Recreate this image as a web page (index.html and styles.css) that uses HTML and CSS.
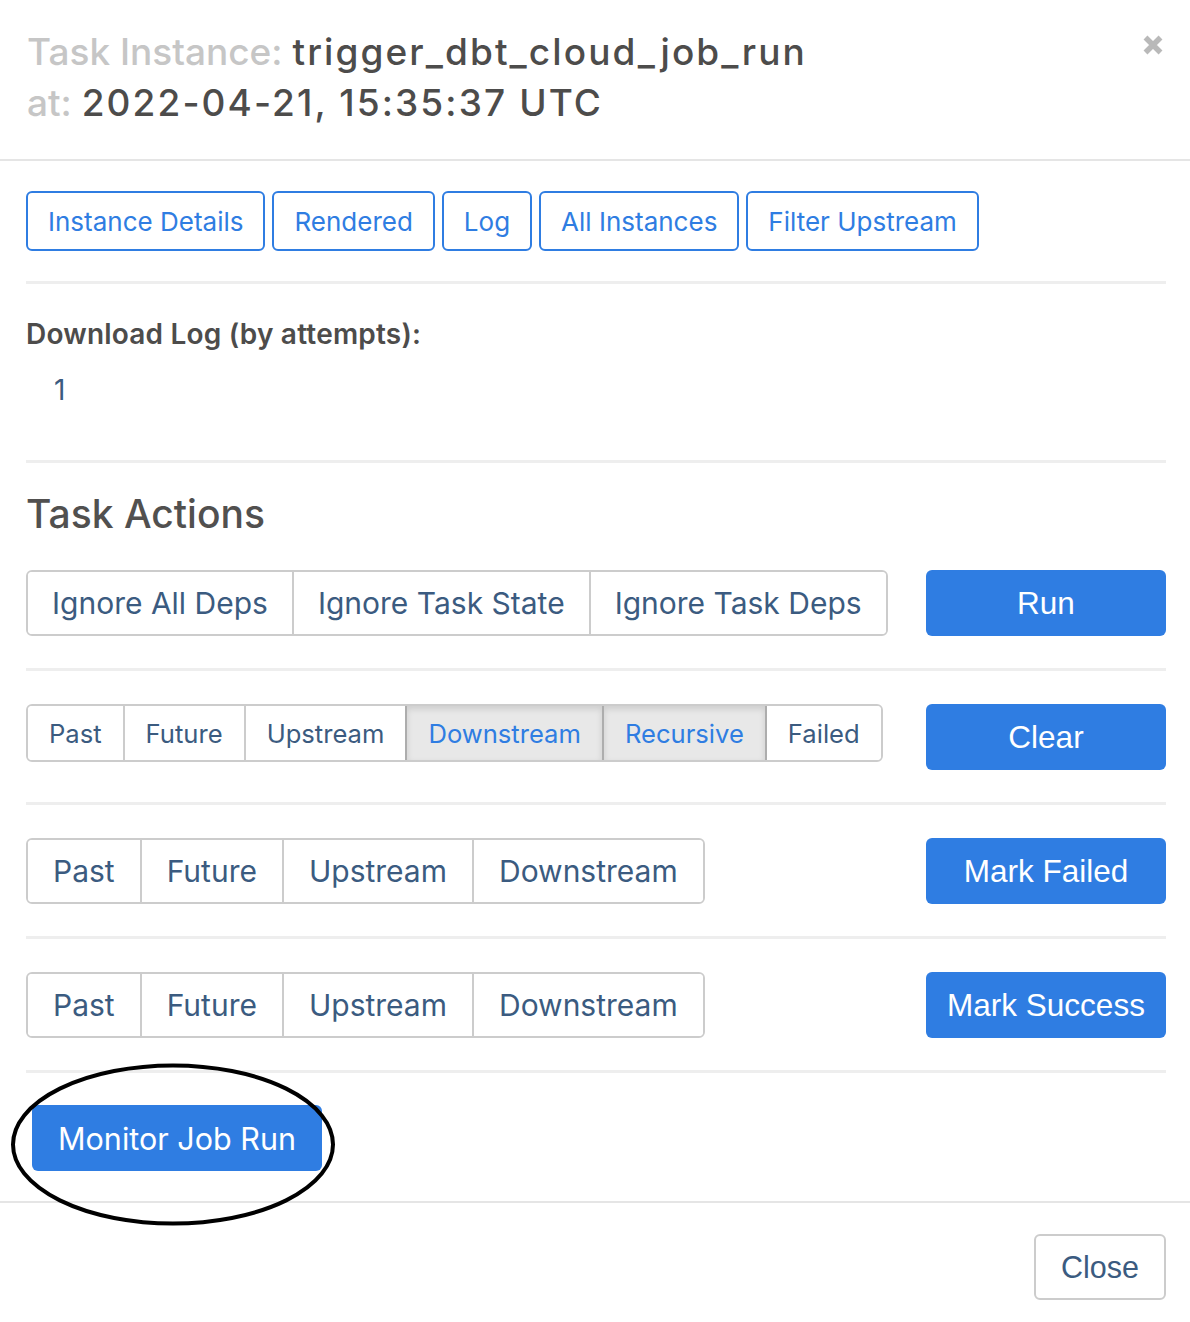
FILE: index.html
```html
<!DOCTYPE html>
<html lang="en">
<head>
<meta charset="utf-8">
<title>Task Instance</title>
<link rel="stylesheet" href="styles.css">
</head>
<body>
<div class="modal">
  <div class="modal-header">
    <h4 class="modal-title">
      <span class="muted">Task Instance:</span> <span class="value">trigger_dbt_cloud_job_run</span><br>
      <span class="muted">at:</span> <span class="value">2022-04-21, 15:35:37 UTC</span>
    </h4>
    <button class="close" aria-label="Close">
      <svg width="20" height="20" viewBox="0 0 20 20"><path d="M2.5 2.5 L17.5 17.5 M17.5 2.5 L2.5 17.5" stroke="#b9b9b9" stroke-width="5.5" stroke-linecap="butt"/></svg>
    </button>
  </div>
  <div class="modal-body">
    <div class="nav-buttons">
      <a class="btn-outline">Instance Details</a>
      <a class="btn-outline">Rendered</a>
      <a class="btn-outline">Log</a>
      <a class="btn-outline">All Instances</a>
      <a class="btn-outline">Filter Upstream</a>
    </div>
    <hr>
    <div class="download">
      <div class="download-label">Download Log (by attempts):</div>
      <ul class="attempts"><li><a>1</a></li></ul>
    </div>
    <hr>
    <h4 class="section-title">Task Actions</h4>
    <div class="action-row">
      <div class="btn-group">
        <span class="seg">Ignore All Deps</span>
        <span class="seg">Ignore Task State</span>
        <span class="seg">Ignore Task Deps</span>
      </div>
      <button class="btn-primary">Run</button>
    </div>
    <hr>
    <div class="action-row">
      <div class="btn-group small">
        <span class="seg">Past</span>
        <span class="seg">Future</span>
        <span class="seg">Upstream</span>
        <span class="seg active">Downstream</span>
        <span class="seg active">Recursive</span>
        <span class="seg">Failed</span>
      </div>
      <button class="btn-primary">Clear</button>
    </div>
    <hr>
    <div class="action-row">
      <div class="btn-group wide">
        <span class="seg">Past</span>
        <span class="seg">Future</span>
        <span class="seg">Upstream</span>
        <span class="seg">Downstream</span>
      </div>
      <button class="btn-primary">Mark Failed</button>
    </div>
    <hr>
    <div class="action-row">
      <div class="btn-group wide">
        <span class="seg">Past</span>
        <span class="seg">Future</span>
        <span class="seg">Upstream</span>
        <span class="seg">Downstream</span>
      </div>
      <button class="btn-primary">Mark Success</button>
    </div>
    <hr>
    <div class="extra">
      <button class="btn-primary monitor">Monitor Job Run</button>
      <svg class="annotation" width="330" height="166" viewBox="0 0 330 166"><ellipse cx="163" cy="81.5" rx="160" ry="79" fill="none" stroke="#000" stroke-width="4"/></svg>
    </div>
  </div>
  <div class="modal-footer">
    <button class="btn-default">Close</button>
  </div>
</div>
</body>
</html>
```
FILE: styles.css
```css
* { box-sizing: border-box; }
html, body { margin: 0; padding: 0; background: #fff; }
body {
  font-family: Inter, "Liberation Sans", Arial, sans-serif;
  color: #51504f;
  width: 1190px;
}
.modal { width: 1190px; }

.modal-header {
  display: flex;
  justify-content: space-between;
  align-items: flex-start;
  padding: 26px 27px 31px 27px;
  border-bottom: 2px solid #e5e5e5;
}
.modal-title {
  margin: 0;
  font-size: 37px;
  font-weight: 500;
  line-height: 51px;
  color: #4d4c4b;
}
.modal-title .muted { color: #c6c6c6; }
.modal-title .value { letter-spacing: 2.1px; }
.close {
  border: 0;
  background: none;
  padding: 0;
  margin: 9px 0 0 0;
  width: 20px;
  height: 20px;
  cursor: pointer;
}
.close svg { display: block; }

.modal-body {
  padding: 30px 24px 0 26px;
}
.nav-buttons {
  display: flex;
  gap: 7px;
}
.btn-outline {
  display: inline-flex;
  align-items: center;
  height: 60px;
  padding: 0 20px;
  border: 2px solid #2f7de2;
  border-radius: 6px;
  color: #2f7de2;
  font-size: 26px;
  font-weight: 400;
}
hr {
  border: 0;
  height: 3px;
  background: #eeeeee;
  margin: 32px 0 33px 0;
}
hr:first-of-type { margin-top: 30px; }
.download-label {
  font-size: 28px;
  font-weight: 600;
  letter-spacing: 0.2px;
  color: #4d4c4b;
  line-height: 36px;
  margin-top: -1px;
}
.attempts {
  list-style: none;
  margin: 20px 0 52px 0;
  padding: 0 0 0 28px;
}
.attempts a {
  font-size: 28px;
  color: #3b5b80;
  line-height: 36px;
}
.section-title {
  margin: -5px 0 33px 0;
  font-size: 39px;
  font-weight: 500;
  line-height: 46px;
  color: #51504f;
}
.action-row {
  display: flex;
  justify-content: space-between;
  align-items: flex-start;
}
.btn-group {
  display: inline-flex;
  border: 2px solid #cccccc;
  border-radius: 6px;
  overflow: hidden;
  height: 66px;
}
.seg {
  display: inline-flex;
  align-items: center;
  padding: 0 24px;
  font-size: 30px;
  color: #3b5b80;
  background: #fff;
}
.seg + .seg { border-left: 2px solid #cccccc; }
.btn-group.wide .seg { padding: 0 25px; }
.btn-group.small { height: 58px; }
.btn-group.small .seg { font-size: 25.6px; padding: 0 21px; }
.seg.active {
  background: #e8e8e8;
  color: #2f7de2;
  box-shadow: inset 0 3px 6px rgba(0,0,0,0.12);
  border-left-color: #adadad;
}
.seg.active + .seg { border-left-color: #adadad; }
.btn-primary {
  width: 240px;
  height: 66px;
  border: 0;
  border-radius: 6px;
  background: #2f7de2;
  color: #fff;
  font-family: "Liberation Sans", Arial, sans-serif;
  font-size: 31.5px;
  white-space: nowrap;
  padding: 0;
}
.extra {
  position: relative;
  margin-top: -1px;
  padding: 0 0 30px 6px;
}
.btn-primary.monitor {
  display: block;
  width: 290px;
  font-family: Inter, "Liberation Sans", Arial, sans-serif;
  font-size: 30.5px;
}
.annotation {
  position: absolute;
  left: -16px;
  top: -42px;
}
.modal-footer {
  border-top: 2px solid #e5e5e5;
  padding: 31px 24px 22px 0;
  display: flex;
  justify-content: flex-end;
}
.btn-default {
  width: 132px;
  height: 66px;
  border: 2px solid #cccccc;
  border-radius: 6px;
  background: #fff;
  color: #3b5b80;
  font-family: "Liberation Sans", Arial, sans-serif;
  font-size: 30.5px;
}
```
